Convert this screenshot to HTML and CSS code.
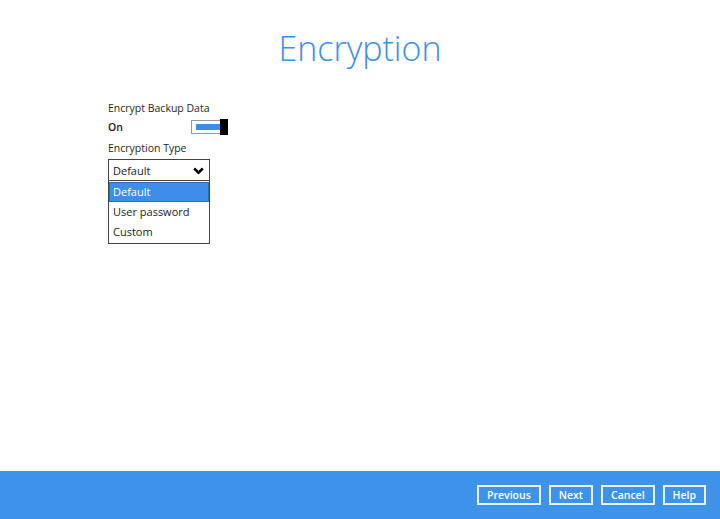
FILE: index.html
```html
<!DOCTYPE html>
<html>
<head>
<meta charset="utf-8">
<link rel="stylesheet" href="styles.css">
</head>
<body>
<div class="page">
  <main class="content">
    <h1 class="title">Encryption</h1>
    <section class="form">
      <div class="label">Encrypt Backup Data</div>
      <div class="toggle-row">
        <span class="on">On</span>
        <span class="toggle"><span class="track"></span><span class="knob"></span></span>
      </div>
      <div class="label type-label">Encryption Type</div>
      <div class="select">
        <div class="select-box">
          <span>Default</span>
          <svg class="chev" width="11" height="8" viewBox="0 0 11 8"><path d="M1.2 1.5 L5.5 5.6 L9.8 1.5" fill="none" stroke="#000" stroke-width="2.6"/></svg>
        </div>
        <ul class="options">
          <li class="opt selected">Default</li>
          <li class="opt">User password</li>
          <li class="opt">Custom</li>
        </ul>
      </div>
    </section>
  </main>
  <footer class="footer">
    <button class="btn">Previous</button>
    <button class="btn">Next</button>
    <button class="btn">Cancel</button>
    <button class="btn">Help</button>
  </footer>
</div>
</body>
</html>
```

FILE: styles.css
```css
* { box-sizing: border-box; }
html, body { margin: 0; padding: 0; }
body {
  width: 720px;
  height: 519px;
  background: #fff;
  font-family: "Open Sans", "DejaVu Sans", sans-serif;
  color: #1a1a1a;
  overflow: hidden;
}
.page {
  display: flex;
  flex-direction: column;
  height: 519px;
}
.content {
  flex: 1;
}
.title {
  margin: 25px 0 0 0;
  text-align: center;
  font-size: 34px;
  font-weight: 300;
  color: #3d8fe3;
  line-height: 46px;
}
.form {
  margin: 29px 0 0 108px;
  width: 130px;
  font-size: 10.5px;
}
.label {
  line-height: 16px;
  color: #1f1f1f;
}
.toggle-row {
  display: flex;
  align-items: center;
  height: 20px;
  margin-top: 1px;
}
.on {
  font-weight: 600;
  width: 83px;
}
.toggle {
  display: flex;
  align-items: center;
  height: 16px;
}
.track {
  display: block;
  width: 29px;
  height: 14px;
  border: 1px solid #9a9a9a;
  border-right: none;
  padding: 3px 0 3px 4px;
  background: #fff;
}
.track::after {
  content: "";
  display: block;
  height: 6px;
  background: #3b8de6;
}
.knob {
  display: block;
  width: 8px;
  height: 16px;
  background: #000;
}
.type-label {
  margin-top: 3px;
}
.select {
  margin-top: 3px;
  width: 102px;
}
.select-box {
  height: 22px;
  border: 1px solid #444;
  display: flex;
  align-items: center;
  justify-content: space-between;
  padding: 0 5px 0 4px;
  background: #fff;
  font-size: 11px;
}
.chev { margin-top: 1px; }
.options {
  list-style: none;
  margin: 0;
  padding: 1px 0 1px 0;
  border: 1px solid #444;
  border-top: none;
  background: #fff;
  font-size: 11px;
}
.opt {
  height: 20px;
  line-height: 20px;
  padding-left: 4px;
}
.opt.selected {
  background: #3d8ee8;
  color: #fff;
  border: 1px solid #2a6fc0;
  line-height: 18px;
  padding-left: 3px;
}
.footer {
  height: 48px;
  background: #3c93e8;
  display: flex;
  justify-content: flex-end;
  align-items: center;
  gap: 7px;
  padding-right: 14px;
}
.btn {
  height: 20px;
  border: 2px solid #e6f1fc;
  background: transparent;
  color: #fff;
  font-family: "Open Sans", "DejaVu Sans", sans-serif;
  font-weight: 600;
  font-size: 10.5px;
  padding: 0 8px;
  line-height: 15px;
  margin-left: 1px;
}
```
